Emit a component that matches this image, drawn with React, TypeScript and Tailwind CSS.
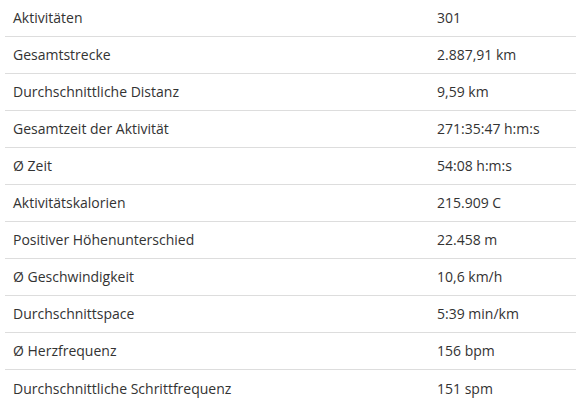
import React from "react";

const rows: [string, string][] = [
  ["Aktivitäten", "301"],
  ["Gesamtstrecke", "2.887,91 km"],
  ["Durchschnittliche Distanz", "9,59 km"],
  ["Gesamtzeit der Aktivität", "271:35:47 h:m:s"],
  ["Ø Zeit", "54:08 h:m:s"],
  ["Aktivitätskalorien", "215.909 C"],
  ["Positiver Höhenunterschied", "22.458 m"],
  ["Ø Geschwindigkeit", "10,6 km/h"],
  ["Durchschnittspace", "5:39 min/km"],
  ["Ø Herzfrequenz", "156 bpm"],
  ["Durchschnittliche Schrittfrequenz", "151 spm"],
];

export default function App() {
  return (
    <div className="w-[576px] h-[414px] bg-white pl-[5px] font-['Open_Sans',sans-serif] text-[14px] text-[#333]">
      {rows.map(([label, value], i) => (
        <div
          key={label}
          className={
            "flex items-center h-[37px] leading-5 " +
            (i < rows.length - 1 ? "border-b border-[#ddd]" : "")
          }
        >
          <div className="w-[424px] px-2">{label}</div>
          <div className="px-2">{value}</div>
        </div>
      ))}
    </div>
  );
}
